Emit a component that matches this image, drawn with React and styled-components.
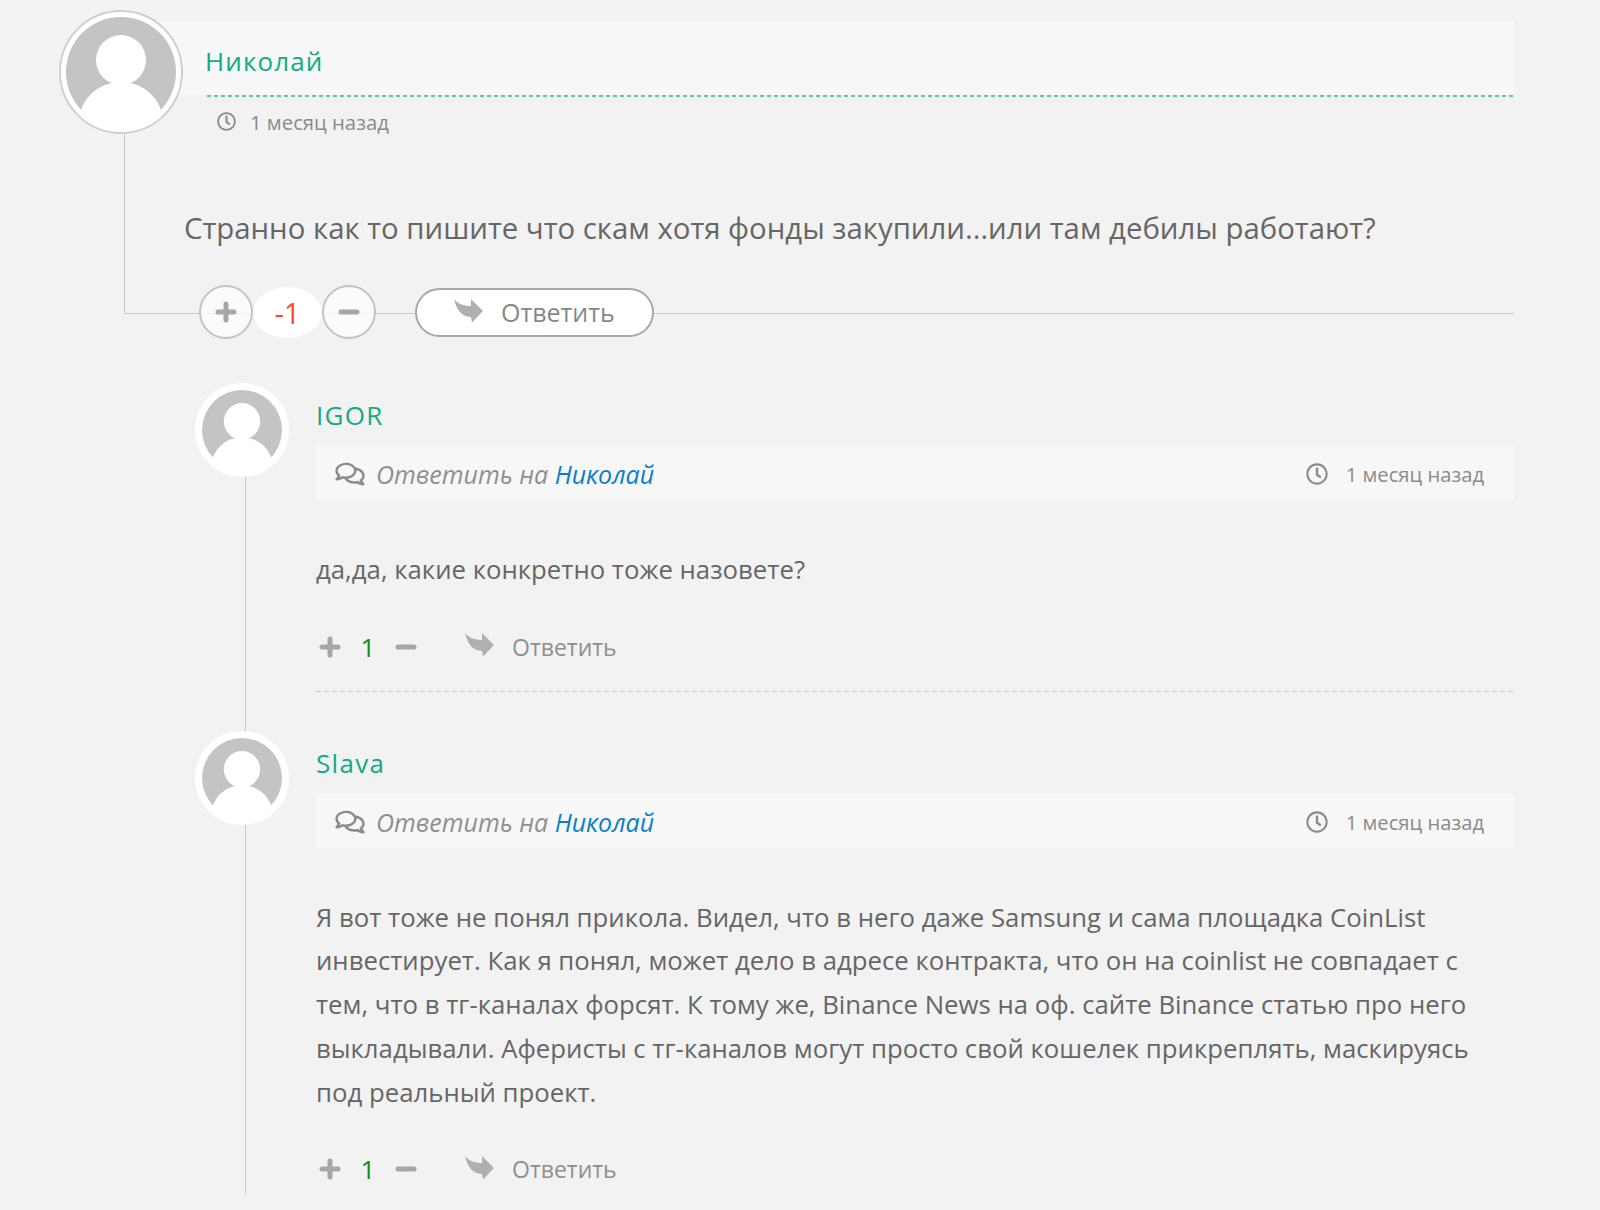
import React from "react";
import styled, { createGlobalStyle } from "styled-components";
import { FaRegClock, FaRegComments } from "react-icons/fa";

const GlobalStyle = createGlobalStyle`
  html, body {
    margin: 0;
    padding: 0;
    background: #f2f2f2;
  }
  body {
    font-family: "Open Sans", "Noto Sans", sans-serif;
    color: #666;
  }
`;

function Avatar() {
  return (
    <svg viewBox="0 0 110 110" width="100%" height="100%">
      <circle cx="55" cy="55" r="55" fill="#c4c4c4" />
      <circle cx="55" cy="43" r="25" fill="#fff" />
      <ellipse cx="55" cy="105" rx="42" ry="40" fill="#fff" />
    </svg>
  );
}

function ReplyArrow() {
  return (
    <svg viewBox="0 0 29 25" width="29" height="25">
      <path d="M0 1C4 6 10 8 17 8L17 1L29 13L18 24.5L17 19C7 19 2 10 0 1Z" fill="#b0b0b0" />
    </svg>
  );
}

function PlusMark() {
  return (
    <svg viewBox="0 0 22 22" width="22" height="22">
      <path d="M3 11H19M11 3V19" stroke="#a6a6a6" strokeWidth="5" strokeLinecap="round" fill="none" />
    </svg>
  );
}

function MinusMark() {
  return (
    <svg viewBox="0 0 22 22" width="22" height="22">
      <path d="M3 11H19" stroke="#a6a6a6" strokeWidth="5" strokeLinecap="round" fill="none" />
    </svg>
  );
}

export default function App() {
  return (
    <Page>
      <GlobalStyle />
      <TopComment>
        <TopHead>
          <BigAvatar>
            <Avatar />
          </BigAvatar>
          <TopMeta>
            <TopName>Николай</TopName>
            <TopTime>
              <FaRegClock />
              <span>1 месяц назад</span>
            </TopTime>
          </TopMeta>
        </TopHead>
        <TopText>Странно как то пишите что скам хотя фонды закупили...или там дебилы работают?</TopText>
        <TopActions>
          <RoundButton>
            <PlusMark />
          </RoundButton>
          <TopScore>-1</TopScore>
          <RoundButton>
            <MinusMark />
          </RoundButton>
          <PillButton>
            <ReplyArrow />
            <span>Ответить</span>
          </PillButton>
        </TopActions>
      </TopComment>

      <Replies>
        <Reply>
          <SmallAvatar>
            <Avatar />
          </SmallAvatar>
          <ReplyBody>
            <ReplyName>IGOR</ReplyName>
            <ReplyBar>
              <ReplyTo>
                <FaRegComments />
                <em>
                  Ответить на <a>Николай</a>
                </em>
              </ReplyTo>
              <BarTime>
                <FaRegClock />
                <span>1 месяц назад</span>
              </BarTime>
            </ReplyBar>
            <ReplyText>да,да, какие конкретно тоже назовете?</ReplyText>
            <ReplyActions>
              <PlusMark />
              <Score>1</Score>
              <MinusMark />
              <ReplyLink>
                <ReplyArrow />
                <span>Ответить</span>
              </ReplyLink>
            </ReplyActions>
          </ReplyBody>
        </Reply>
        <Separator />
        <Reply>
          <SmallAvatar>
            <Avatar />
          </SmallAvatar>
          <ReplyBody>
            <ReplyName>Slava</ReplyName>
            <ReplyBar>
              <ReplyTo>
                <FaRegComments />
                <em>
                  Ответить на <a>Николай</a>
                </em>
              </ReplyTo>
              <BarTime>
                <FaRegClock />
                <span>1 месяц назад</span>
              </BarTime>
            </ReplyBar>
            <ReplyText>
              Я вот тоже не понял прикола. Видел, что в него даже Samsung и сама площадка CoinList
              <br />
              инвестирует. Как я понял, может дело в адресе контракта, что он на coinlist не совпадает с
              <br />
              тем, что в тг-каналах форсят. К тому же, Binance News на оф. сайте Binance статью про него
              <br />
              выкладывали. Аферисты с тг-каналов могут просто свой кошелек прикреплять, маскируясь
              <br />
              под реальный проект.
            </ReplyText>
            <ReplyActions>
              <PlusMark />
              <Score>1</Score>
              <MinusMark />
              <ReplyLink>
                <ReplyArrow />
                <span>Ответить</span>
              </ReplyLink>
            </ReplyActions>
          </ReplyBody>
        </Reply>
      </Replies>
    </Page>
  );
}

const Page = styled.div`
  width: 1600px;
  height: 1210px;
  box-sizing: border-box;
  padding: 10px 86px 0 59px;
  overflow: hidden;
`;

const TopComment = styled.section`
  position: relative;
  &::before {
    content: "";
    position: absolute;
    left: 65px;
    top: 124px;
    width: 1px;
    height: 180px;
    background: #c8c8c8;
  }
`;

const TopHead = styled.div`
  display: flex;
  position: relative;
  isolation: isolate;
  height: 140px;
`;

const BigAvatar = styled.div`
  position: relative;
  z-index: 1;
  width: 124px;
  height: 124px;
  flex: none;
  box-sizing: border-box;
  padding: 5px;
  border: 2px solid #cfcfcf;
  border-radius: 50%;
  background: #fff;
  overflow: hidden;
`;

const TopMeta = styled.div`
  flex: 1;
  margin-left: 24px;
  padding-top: 11px;
`;

const TopName = styled.div`
  position: relative;
  height: 76px;
  line-height: 80px;
  font-size: 26px;
  letter-spacing: 1.1px;
  text-indent: -2px;
  color: #10ad82;
  background: repeating-linear-gradient(to right, #55c9a8 0 4px, transparent 4px 7px) left bottom / 100% 2px no-repeat;
  &::before {
    content: "";
    position: absolute;
    top: 0;
    bottom: 2px;
    left: -50px;
    right: 0;
    z-index: -1;
    background: #f7f7f7;
  }
`;

const TopTime = styled.div`
  display: flex;
  align-items: center;
  height: 49px;
  padding-left: 10px;
  font-size: 20.3px;
  color: #8a8a8a;
  svg {
    width: 19px;
    height: 19px;
    margin-right: 14px;
  }
`;

const TopText = styled.p`
  margin: 56px 0 0 125px;
  font-size: 29.35px;
  line-height: 44px;
  color: #666;
`;

const TopActions = styled.div`
  position: relative;
  display: flex;
  align-items: center;
  margin-top: 36px;
  padding-left: 140px;
  height: 52px;
  &::before {
    content: "";
    position: absolute;
    left: 65px;
    right: 0;
    top: 27px;
    height: 1px;
    background: #c8c8c8;
  }
`;

const RoundButton = styled.div`
  position: relative;
  width: 54px;
  height: 54px;
  box-sizing: border-box;
  display: flex;
  align-items: center;
  justify-content: center;
  border: 2px solid #c4c4c4;
  border-radius: 50%;
  background: rgba(255, 255, 255, 0.7);
`;

const TopScore = styled.div`
  position: relative;
  width: 69px;
  height: 51px;
  display: flex;
  align-items: center;
  justify-content: center;
  border-radius: 50%;
  background: #fff;
  color: #fb4a26;
  font-size: 29px;
`;

const PillButton = styled.div`
  position: relative;
  display: flex;
  align-items: center;
  gap: 18px;
  box-sizing: border-box;
  margin-left: 39px;
  width: 239px;
  height: 49px;
  padding-left: 37px;
  border: 2px solid #a8a8a8;
  border-radius: 25px;
  background: #fff;
  font-size: 25px;
  color: #888;
  svg {
    margin-top: -3px;
  }
`;

const Replies = styled.div`
  position: relative;
  margin: 45px 0 0 136px;
  &::before {
    content: "";
    position: absolute;
    left: 50px;
    top: 90px;
    height: 721px;
    width: 1px;
    background: #c8c8c8;
  }
`;

const Reply = styled.article`
  position: relative;
  display: flex;
  gap: 27px;
`;

const SmallAvatar = styled.div`
  width: 94px;
  height: 94px;
  flex: none;
  box-sizing: border-box;
  padding: 7px;
  border-radius: 50%;
  background: #fff;
  overflow: hidden;
`;

const ReplyBody = styled.div`
  flex: 1;
  min-width: 0;
`;

const ReplyName = styled.div`
  height: 63px;
  line-height: 64px;
  font-size: 26px;
  letter-spacing: 1.3px;
  color: #10ad82;
`;

const ReplyBar = styled.div`
  display: flex;
  align-items: center;
  justify-content: space-between;
  height: 54px;
  padding: 2px 30px 0 19px;
  box-sizing: border-box;
  background: #f7f7f7;
`;

const ReplyTo = styled.div`
  display: flex;
  align-items: center;
  font-size: 25px;
  color: #8f8f8f;
  svg {
    width: 30px;
    height: 26px;
    margin-right: 11px;
    color: #8a8a8a;
  }
  em {
    font-style: italic;
  }
  a {
    color: #0a7fc9;
  }
`;

const BarTime = styled.div`
  display: flex;
  align-items: center;
  font-size: 20.2px;
  color: #8a8a8a;
  svg {
    width: 22px;
    height: 22px;
    margin-right: 18px;
  }
`;

const ReplyText = styled.p`
  margin: 48px 0 0;
  font-size: 25.75px;
  line-height: 43.7px;
  color: #666;
`;

const ReplyActions = styled.div`
  display: flex;
  align-items: center;
  height: 44px;
  margin-top: 33px;
  padding-left: 3px;
  font-size: 26px;
`;

const Score = styled.span`
  width: 54px;
  text-align: center;
  color: #128a12;
`;

const ReplyLink = styled.div`
  display: flex;
  align-items: center;
  gap: 18px;
  margin-left: 48px;
  font-size: 23px;
  color: #8f8f8f;
  svg {
    margin-top: -4px;
  }
`;

const Separator = styled.div`
  margin: 22px 0 39px 121px;
  height: 1px;
  background: repeating-linear-gradient(to right, #c6c6c6 0 5px, transparent 5px 8px);
`;
